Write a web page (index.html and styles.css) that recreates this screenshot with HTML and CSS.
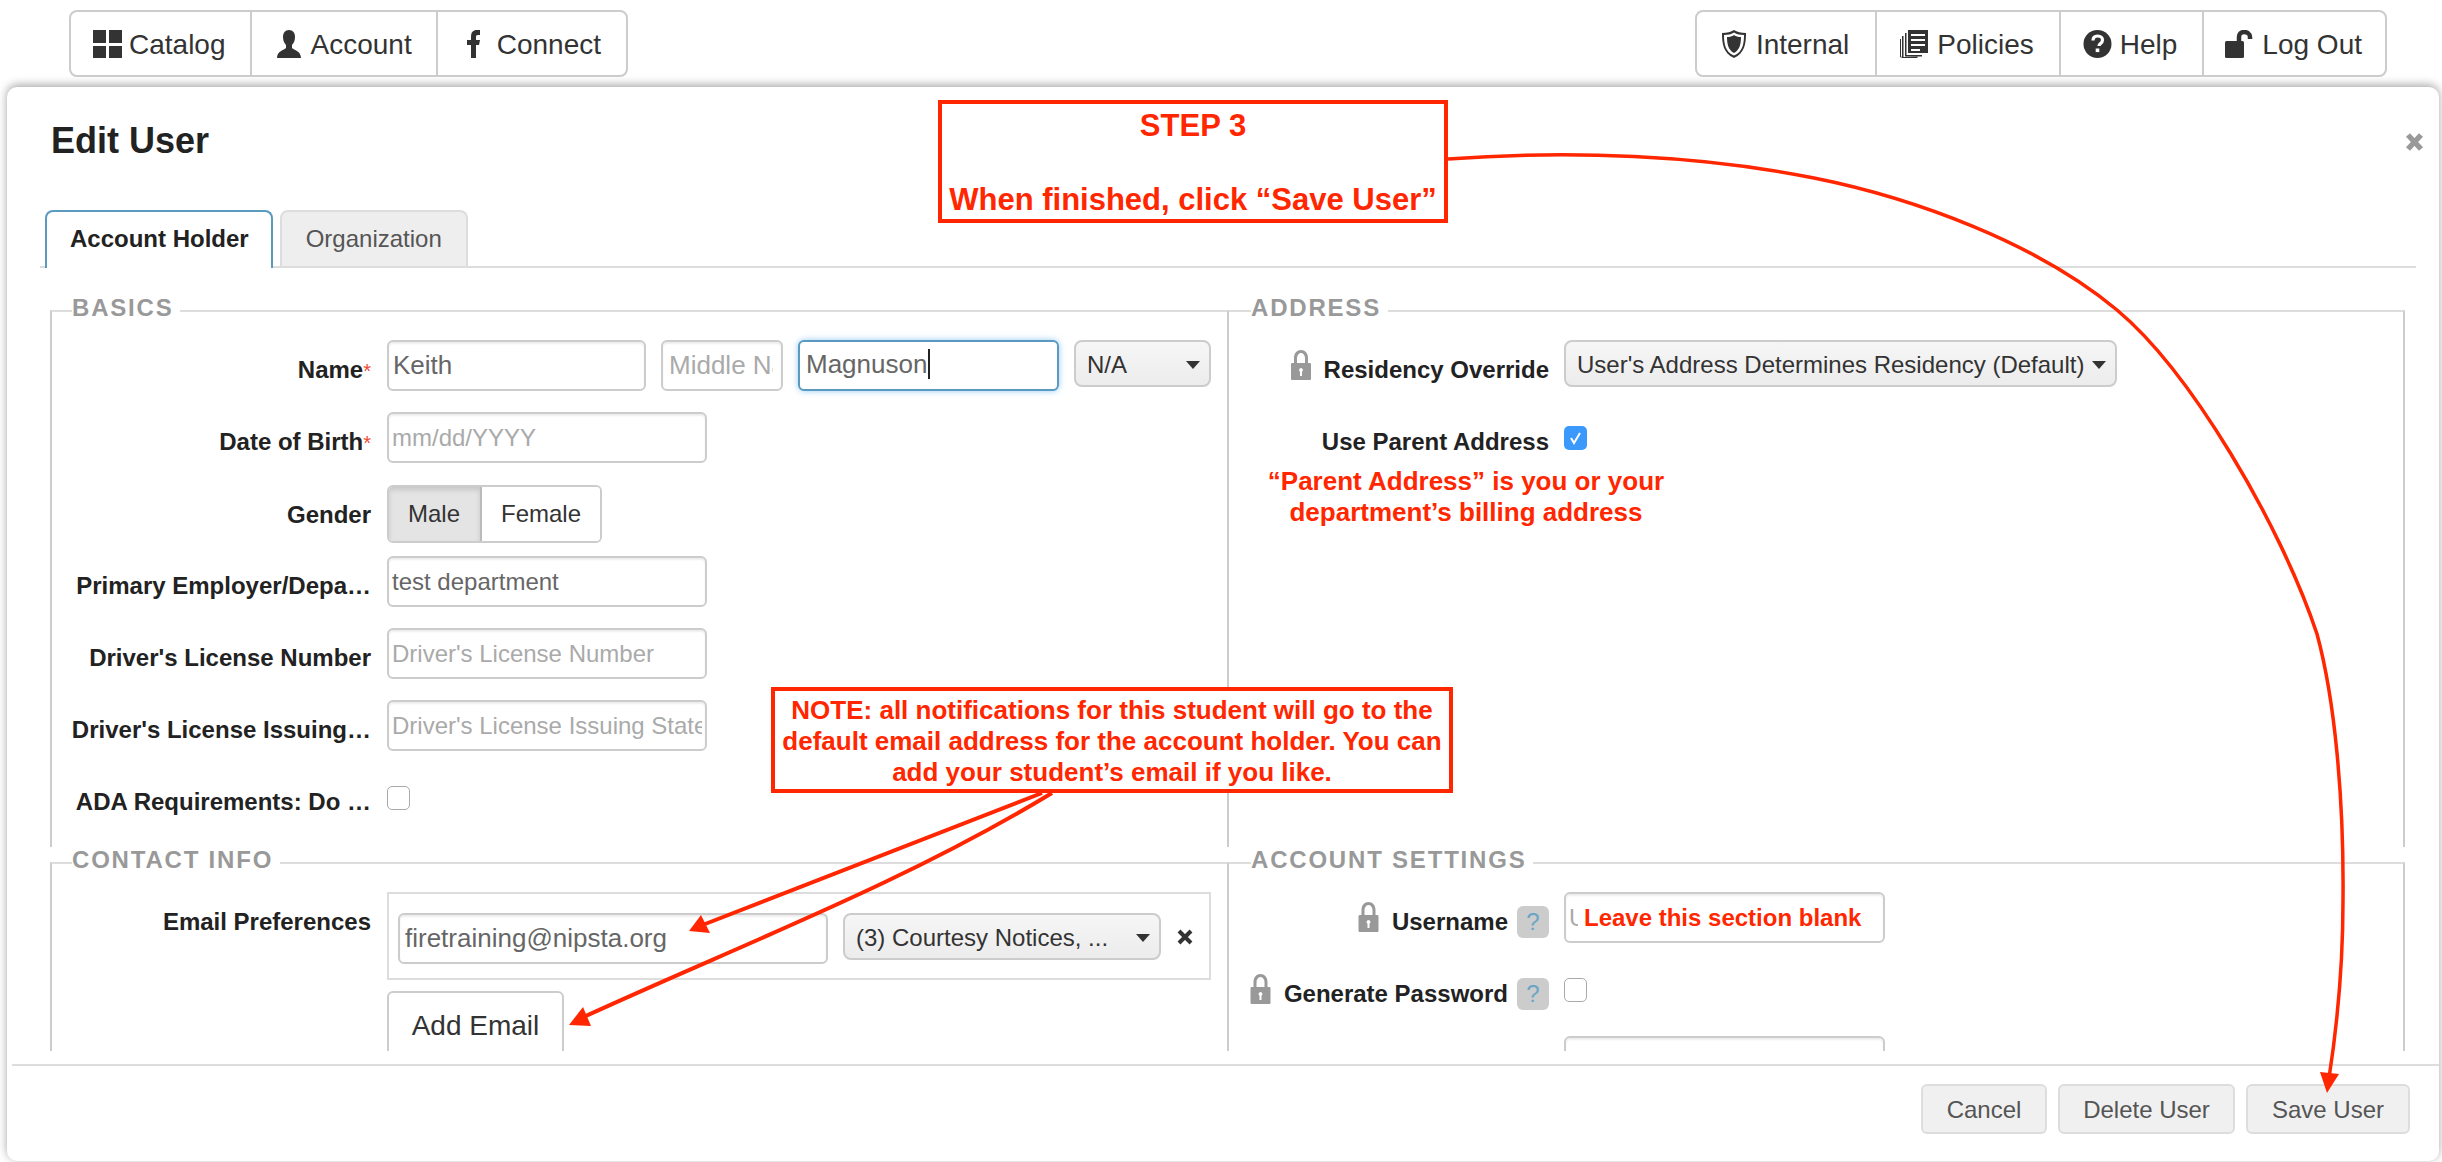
FILE: index.html
```html
<!DOCTYPE html>
<html lang="en">
<head>
<meta charset="utf-8">
<title>Edit User</title>
<link rel="stylesheet" href="styles.css">
</head>
<body>
<div class="page">
  <header class="topnav">
    <nav class="navgroup">
      <a class="navitem gap7 pad-cat"><svg class="ic" width="29" height="28" viewBox="0 0 29 28"><path d="M0 0h13v13H0zM16 0h13v13H16zM0 16h13v12H0zM16 16h13v12H16z"/></svg>Catalog</a>
      <a class="navitem gap10 pad-acc"><svg class="ic" width="24" height="28" viewBox="0 0 24 28"><path d="M12 0c4 0 6 3 6 7 0 3-1 6-3 8v3c2 2 9 3 9 10H0c0-7 7-8 9-10v-3C7 13 6 10 6 7c0-4 2-7 6-7z"/></svg>Account</a>
      <a class="navitem gap17 pad-f"><svg class="ic" width="13" height="28" viewBox="0 0 13 28"><path d="M4 28V15H0V10h4V7c0-5 2-7 6-7h3v5h-2c-2 0-2 1-2 2v3h4l-1 5H9v13z"/></svg>Connect</a>
    </nav>
    <nav class="navgroup">
      <a class="navitem gap10 pad-int"><svg class="ic" width="24" height="28" viewBox="0 0 24 28"><path d="M12 0c3 2 7 3 12 3 0 10-1 20-12 25C1 23 0 13 0 3c5 0 9-1 12-3zm0 2.500C9 4.300 6 5 2 5c0 8 1 17 10 20.500C21 22 22 13 22 5c-4 0-7-.7-10-2.500z"/><path d="M12 5c2 1.500 4 2 7 2 0 6-1 13-7 16-6-3-7-10-7-16 3 0 5-.5 7-2z"/></svg>Internal</a>
      <a class="navitem gap9 pad-pol"><svg class="ic" width="28" height="28" viewBox="0 0 28 28"><path d="M8 0h20v23H8zm3 4v2h14V4zm0 5v2h14V9zm0 5v2h14v-2zm0 5v2h9v-2z" fill-rule="evenodd"/><path d="M5 3h1.500v22H22v1.500H5zM2 6h1.500v21l14 -.2V28L2 28zM0 9h1v17l1 2-2-1z"/></svg>Policies</a>
      <a class="navitem gap8 pad-help"><svg class="ic" width="29" height="28" viewBox="0 0 29 28"><circle cx="14.500" cy="14" r="14"/><path d="M10 10.500c0-3 2-4.500 4.700-4.500 3 0 4.800 1.700 4.800 4 0 3.500-3.500 3.500-3.500 6" fill="none" stroke="#fff" stroke-width="3.200"/><rect x="12.700" y="18.500" width="3.600" height="3.600" fill="#fff"/></svg>Help</a>
      <a class="navitem gap9 pad-out"><svg class="ic" width="28" height="28" viewBox="0 0 28 28"><rect x="0" y="11" width="19" height="17" rx="1.500"/><path d="M14 12V7c0-3 2-5 5-5s6 2 6 5v2" fill="none" stroke="#333" stroke-width="4.500"/></svg>Log Out</a>
    </nav>
  </header>

  <main class="modal">
    <div class="modal-head">
      <h1 class="modal-title">Edit User</h1>
      <svg class="close" width="19" height="18" viewBox="0 0 19 18"><path d="M3 2l13 14M16 2L3 16" stroke="#999" stroke-width="5.500" fill="none"/></svg>
    </div>
    <div class="tabs">
      <a class="tab tab-active">Account Holder</a>
      <a class="tab">Organization</a>
    </div>
    <div class="modal-body">
      <section class="sec">
        <div class="legend legend-l"><span class="legend-text">BASICS</span></div>
        <div class="sec-body">
          <div class="row gap21">
            <label class="lbl">Name<span class="req">*</span></label>
            <div class="name-fields">
              <input class="input big w-first" value="Keith">
              <input class="input big w-mid" placeholder="Middle Name">
              <div class="input big focused w-last">Magnuson<span class="caret"></span></div>
              <div class="select w-suffix">N/A<svg class="arrow" width="14" height="8" viewBox="0 0 14 8"><path d="M0 0h14L7 8z"/></svg></div>
            </div>
          </div>
          <div class="row gap22">
            <label class="lbl">Date of Birth<span class="req">*</span></label>
            <input class="input w-full" placeholder="mm/dd/YYYY">
          </div>
          <div class="row gap13">
            <label class="lbl">Gender</label>
            <div class="toggle"><span class="toggle-btn on">Male</span><span class="toggle-btn">Female</span></div>
          </div>
          <div class="row gap21">
            <label class="lbl">Primary Employer/Depa…</label>
            <input class="input w-full" value="test department">
          </div>
          <div class="row gap21">
            <label class="lbl">Driver's License Number</label>
            <input class="input w-full" placeholder="Driver's License Number">
          </div>
          <div class="row gap35">
            <label class="lbl">Driver's License Issuing…</label>
            <input class="input w-full" placeholder="Driver's License Issuing State">
          </div>
          <div class="row">
            <label class="lbl lbl-cb">ADA Requirements: Do …</label>
            <span class="check"></span>
          </div>
        </div>
      </section>

      <section class="sec sec-right">
        <div class="legend"><span class="legend-text">ADDRESS</span></div>
        <div class="sec-body">
          <div class="row gap39">
            <label class="lbl lbl-r"><svg class="lock" width="20" height="30" viewBox="0 0 20 30"><use href="#lock"/></svg>Residency Override</label>
            <div class="select w-res">User's Address Determines Residency (Default)<svg class="arrow" width="14" height="8" viewBox="0 0 14 8"><path d="M0 0h14L7 8z"/></svg></div>
          </div>
          <div class="row">
            <label class="lbl lbl-r lbl-cb">Use Parent Address</label>
            <span class="check check-on"><svg width="23" height="24" viewBox="0 0 23 24"><path d="M7 12l3 5 6-10" fill="none" stroke="#fff" stroke-width="2"/></svg></span>
          </div>
        </div>
      </section>

      <section class="sec">
        <div class="legend legend-l"><span class="legend-text">CONTACT INFO</span></div>
        <div class="sec-body">
          <div class="row gap11">
            <label class="lbl">Email Preferences</label>
            <div class="email-box">
              <input class="input big w-email" value="firetraining@nipsta.org">
              <div class="select w-pref">(3) Courtesy Notices, ...<svg class="arrow" width="14" height="8" viewBox="0 0 14 8"><path d="M0 0h14L7 8z"/></svg></div>
              <svg class="remove" width="16" height="16" viewBox="0 0 16 16"><path d="M2 2l12 12M14 2L2 14" stroke="#333" stroke-width="4" fill="none"/></svg>
            </div>
          </div>
          <div class="row">
            <span class="lbl"></span>
            <button class="add-btn" type="button">Add Email</button>
          </div>
        </div>
      </section>

      <section class="sec sec-right">
        <div class="legend"><span class="legend-text">ACCOUNT SETTINGS</span></div>
        <div class="sec-body">
          <div class="row gap35">
            <label class="lbl lbl-r lbl-help"><svg class="lock" width="21" height="30" viewBox="0 0 20 30"><use href="#lock"/></svg>Username<span class="help">?</span></label>
            <input class="input w-acct" placeholder="Username">
          </div>
          <div class="row gap34">
            <label class="lbl lbl-r lbl-help lbl-cb"><svg class="lock" width="21" height="30" viewBox="0 0 20 30"><use href="#lock"/></svg>Generate Password<span class="help">?</span></label>
            <span class="check"></span>
          </div>
          <div class="row">
            <span class="lbl lbl-r"></span>
            <input class="input w-acct">
          </div>
        </div>
      </section>
    </div>
    <footer class="modal-foot">
      <button class="foot-btn btn-cancel" type="button">Cancel</button>
      <button class="foot-btn btn-delete" type="button">Delete User</button>
      <button class="foot-btn btn-save" type="button">Save User</button>
    </footer>
  </main>

  <svg class="defs" width="0" height="0"><defs>
    <g id="lock"><path d="M3 13V8c0-5 3-8 7-8s7 3 7 8v5h-3V8c0-3-2-5-4-5S6 5 6 8v5z" fill="#999"/><path fill-rule="evenodd" d="M1.500 13h17c1 0 1.500.5 1.500 1.500v14c0 1-.5 1.500-1.500 1.500h-17C.5 30 0 29.500 0 28.500v-14C0 13.500.5 13 1.500 13zM10 18a2 2 0 0 0-1 3.700V26h2v-4.300A2 2 0 0 0 10 18z" fill="#999"/></g>
  </defs></svg>

  <svg class="arrows" width="2442" height="1162" viewBox="0 0 2442 1162">
    <path class="arrow-line thin" d="M1448 159C1570 150 1700 155 1814 178C1914 198 2037 243 2117 310C2190 371 2280 523 2317 634C2335 700 2344 800 2343 900C2343 960 2338 1020 2329 1078"/>
    <path class="arrow-head" d="M2327 1093L2320 1072L2339 1074z"/>
    <path class="arrow-line" d="M1042 793L700 926"/>
    <path class="arrow-head" d="M689 931L701 915L710 933z"/>
    <path class="arrow-line" d="M1052 793C900 885 740 945 577 1020"/>
    <path class="arrow-head" d="M569 1025L583 1007L591 1026z"/>
  </svg>

  <div class="note note-step"><div>STEP 3</div><div class="note-gap">When finished, click “Save User”</div></div>
  <div class="note note-email">NOTE: all notifications for this student will go to the default email address for the account holder. You can add your student’s email if you like.</div>
  <div class="red-text red-parent">“Parent Address” is you or your<br>department’s billing address</div>
  <div class="red-text red-blank">Leave this section blank</div>
</div>
</body>
</html>
```

FILE: styles.css
```css
* { box-sizing: border-box; }
html, body { margin: 0; padding: 0; background: #fff; }
body { font-family: "Liberation Sans", Arial, sans-serif; color: #333; }
.page { position: relative; width: 2442px; height: 1162px; overflow: hidden; }

/* top navigation */
.topnav { display: flex; justify-content: space-between; padding: 10px 55px 0 69px; height: 87px; position: relative; z-index: 2; }
.navgroup { display: flex; height: 67px; border: 2px solid #ccc; border-radius: 8px; background: #fff; }
.navitem { display: flex; align-items: center; font-size: 28px; line-height: 34px; color: #333; padding: 2px 25px 0 22px; border-left: 2px solid #ccc; white-space: nowrap; }
.navitem:first-child { border-left: 0; }
.ic { fill: #333; flex: none; margin-top: -1px; }
.gap7 .ic { margin-right: 7px; }
.gap8 .ic { margin-right: 8px; }
.gap9 .ic { margin-right: 9px; }
.gap10 .ic { margin-right: 10px; }
.gap17 .ic { margin-right: 17px; }
.pad-cat { padding-right: 24px; }
.pad-acc { padding-left: 25px; padding-right: 24px; }
.pad-f { padding-left: 29px; }
.pad-int { padding-left: 25px; padding-right: 26px; }
.pad-pol { padding-left: 23px; padding-right: 25px; }
.pad-help { padding-left: 22px; padding-right: 25px; }
.pad-out { padding-left: 21px; padding-right: 23px; }

/* modal */
.modal { margin: 0 3px 0 7px; height: 1074px; background: #fff; border-radius: 10px; box-shadow: 0 -2px 10px rgba(0,0,0,.36); position: relative; z-index: 1; }
.modal-head { display: flex; justify-content: space-between; height: 123px; padding: 34px 15px 0 44px; }
.modal-title { margin: 0; font-size: 36px; line-height: 40px; font-weight: bold; color: #222; }
.close { margin-top: 12px; }

.tabs { display: flex; gap: 7px; margin: 0 23px 0 33px; padding-left: 5px; height: 58px; border-bottom: 2px solid #ddd; }
.tab { height: 56px; padding: 0 24px; font-size: 24px; line-height: 54px; color: #555; background: #eee; border: 2px solid #ddd; border-bottom: 0; border-radius: 8px 8px 0 0; }
.tab-active { height: 58px; padding: 0 22px 0 23px; color: #222; font-weight: bold; background: #fff; border-color: #5b9ac0; position: relative; }

.modal-body { display: grid; grid-template-columns: 1177px 1178px; grid-template-rows: 552px 204px; height: 783px; margin-left: 43px; padding-top: 27px; overflow: hidden; }

.legend { display: flex; align-items: flex-start; height: 32px; font-size: 24px; line-height: 24px; font-weight: bold; letter-spacing: 1.8px; color: #999; }
.legend::before { content: ""; width: 22px; height: 17px; margin-top: 15px; border-top: 2px solid #ddd; border-left: 2px solid #ccc; }
.legend-l::before { width: 20px; }
.legend::after { content: ""; flex: 1; height: 2px; margin-top: 15px; background: #ddd; }
.legend-text { padding: 1px 7px 0 0; white-space: nowrap; }
.sec-right .legend::after { height: 17px; background: none; border-top: 2px solid #ddd; border-right: 2px solid #ccc; }
.sec-body { padding-top: 13px; border-left: 2px solid #ccc; min-height: 520px; }
.sec-right .sec-body { border-right: 2px solid #ccc; }

.row { display: flex; align-items: flex-start; }
.gap11 { margin-bottom: 11px; }
.gap13 { margin-bottom: 13px; }
.gap21 { margin-bottom: 21px; }
.gap22 { margin-bottom: 22px; }
.gap34 { margin-bottom: 34px; }
.gap35 { margin-bottom: 35px; }
.gap39 { margin-bottom: 39px; }

.lbl { flex: none; height: 44px; width: 319px; margin-right: 16px; padding-top: 16px; font-size: 24px; line-height: 28px; font-weight: bold; color: #222; text-align: right; white-space: nowrap; }
.lbl-r { width: 320px; margin-right: 15px; }
.lbl-cb { padding-top: 2px; height: 24px; }
.lbl-help { position: relative; padding-right: 41px; margin-right: 15px; }
.req { color: #ee4a30; font-weight: normal; font-size: 20px; }

.lock { margin: -14px 13px 0 0; vertical-align: -2px; }
.help { position: absolute; right: 0; top: 14px; width: 32px; height: 32px; border-radius: 6px; background: #ccc; color: #6aa5c8; font-size: 24px; line-height: 32px; text-align: center; font-weight: normal; }
.lbl-cb .help { top: 0; }

.input { display: block; height: 51px; padding: 0 3px; font: 24px "Liberation Sans", Arial, sans-serif; color: #666; line-height: 45px; background: #fff; border: 2px solid #ccc; border-radius: 6px; box-shadow: inset 0 2px 2px rgba(0,0,0,.07); outline: 0; }
.input::placeholder { color: #aaa; opacity: 1; }
.big { font-size: 26px; padding: 0 4px; }
.w-full { width: 320px; }
.w-first { width: 259px; }
.w-mid { width: 122px; padding: 0 8px 0 6px; }
.w-last { width: 261px; padding-left: 6px; }
.w-email { width: 430px; padding: 0 5px; }
.w-acct { width: 321px; }
.focused { position: relative; border-color: #5b9ac0; box-shadow: 0 0 6px rgba(82,168,236,.6); }
.caret { display: inline-block; width: 2px; height: 30px; margin-left: 1px; background: #222; vertical-align: -6px; }
.name-fields { display: flex; gap: 15px; }

.select { position: relative; height: 47px; padding-left: 11px; font-size: 24px; line-height: 45px; color: #333; background: linear-gradient(#f6f6f6, #ececec); border: 2px solid #ccc; border-radius: 8px; white-space: nowrap; }
.arrow { position: absolute; right: 9px; top: 19px; fill: #333; }
.w-suffix { width: 137px; }
.w-res { width: 553px; }
.w-pref { width: 318px; margin-left: 15px; }

.toggle { display: flex; height: 58px; border: 2px solid #ccc; border-radius: 6px; overflow: hidden; font-size: 24px; line-height: 54px; }
.toggle-btn { padding: 0 19px; background: #fff; color: #333; }
.toggle-btn.on { width: 93px; background: #e4e4e4; box-shadow: inset 0 3px 5px rgba(0,0,0,.13); border-right: 2px solid #bbb; }

.check { flex: none; display: block; width: 23px; height: 24px; background: #fff; border: 1px solid #aaa; border-radius: 5px; }
.check-on { background: #3b99fc; border: 0; }
.check svg { display: block; }

.email-box { display: flex; align-items: flex-start; width: 824px; height: 88px; padding: 19px 9px 0 9px; border: 2px solid #ddd; }
.remove { margin: 16px 0 0 16px; }
.add-btn { width: 177px; height: 70px; padding: 0; font: 28px "Liberation Sans", Arial, sans-serif; color: #333; background: #fff; border: 2px solid #ccc; border-radius: 6px; }

.modal-foot { display: flex; justify-content: flex-end; gap: 11px; margin: 13px 0 0 5px; padding: 18px 29px 0 0; border-top: 2px solid #ddd; }
.foot-btn { height: 50px; padding: 2px 0 0; font: 24px "Liberation Sans", Arial, sans-serif; color: #555; background: #f0f0f0; border: 2px solid #ddd; border-radius: 6px; }
.btn-cancel { width: 126px; }
.btn-delete { width: 177px; }
.btn-save { width: 164px; }

/* annotations laid over the screenshot */
.defs { position: absolute; }
.arrows { position: absolute; left: 0; top: 0; z-index: 5; pointer-events: none; }
.arrow-line { fill: none; stroke: #ff2600; stroke-width: 4; }
.arrow-line.thin { stroke-width: 3.500; }
.arrow-head { fill: #ff2600; }
.note { position: absolute; z-index: 6; background: #fff; border: 4px solid #ff2600; color: #ff2600; font-weight: bold; text-align: center; }
.note-step { left: 938px; top: 100px; width: 510px; height: 123px; font-size: 31px; line-height: 37px; padding-top: 3px; white-space: nowrap; }
.note-gap { margin-top: 37px; }
.note-email { left: 771px; top: 687px; width: 682px; height: 106px; font-size: 26px; line-height: 31px; padding-top: 4px; }
.red-text { position: absolute; z-index: 6; color: #ff2600; font-weight: bold; font-size: 26px; line-height: 31px; }
.red-parent { left: 1249px; top: 466px; width: 434px; text-align: center; }
.red-blank { left: 1578px; top: 902px; width: 302px; padding-left: 6px; background: #fff; font-size: 24px; line-height: 32px; white-space: nowrap; }
```
